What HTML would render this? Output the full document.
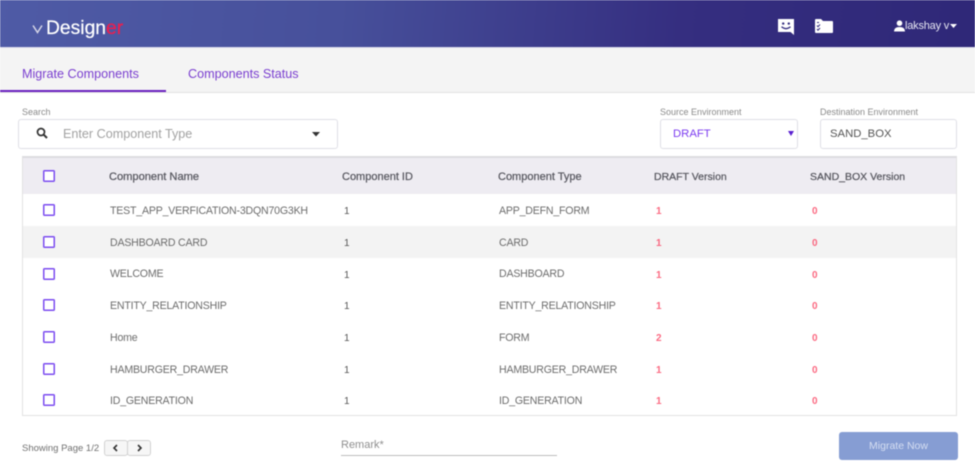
<!DOCTYPE html>
<html>
<head>
<meta charset="utf-8">
<style>
html,body{margin:0;padding:0;background:#fff;}
body{width:975px;height:471px;overflow:hidden;position:relative;font-family:"Liberation Sans",sans-serif;color:#555;}
.a{position:absolute;white-space:nowrap;}
#w{position:absolute;left:0;top:0;width:975px;height:471px;overflow:hidden;filter:blur(0.4px);}
.hdr{left:0;top:0;width:975px;height:47px;background:linear-gradient(95deg,#4f5ba6 0%,#47509b 35%,#352e80 70%,#2f2878 100%);}
.tabs{left:0;top:47px;width:975px;height:46px;background:#f4f4f4;border-top:1px solid #dcdcec;border-bottom:1px solid #e2e2e2;box-sizing:border-box;}
.tab{font-size:12.6px;color:#7a3fd0;top:67px;}
.lbl{font-size:9px;color:#8a8a8a;top:107px;}
.box{background:#fff;border:1px solid #dfdfe6;border-radius:3px;box-sizing:border-box;}
.th{font-size:11.1px;color:#585860;top:171px;font-weight:400;-webkit-text-stroke:.25px #585860;}
.t{font-size:10.6px;letter-spacing:-.2px;color:#6c6c6c;transform:translateY(2px);}
.n{font-size:10px;color:#555;transform:translateY(2px);}
.r{font-size:10px;color:#fb4f6c;font-weight:700;opacity:.85;transform:translateY(2px);}
.cb{position:absolute;left:43px;width:10px;height:10px;border:1px solid #7c4df0;border-radius:1.5px;background:#fff;box-shadow:inset 0 0 0 .5px #7c4df0;}
.btn{position:absolute;top:440px;border:1px solid #d2d2d2;border-radius:3px;background:#f6f6f6;box-sizing:border-box;}
</style>
</head>
<body>
<div id="w">
<div class="a hdr"></div>
<svg class="a" style="left:32px;top:24px" width="12" height="10" viewBox="0 0 12 10"><path d="M1 1.5 L5.5 8.5 L10 1.5" fill="none" stroke="#d5d5e6" stroke-width="1.5"/></svg>
<div class="a" style="left:46px;top:16px;font-size:19.3px;line-height:26px;color:#fff;-webkit-text-stroke:.2px #fff">Design<span style="color:#ea1f50;-webkit-text-stroke:.3px #ea1f50">er</span></div>

<svg class="a" style="left:777px;top:18px" width="18" height="18" viewBox="0 0 18 18"><path d="M1 1 H17 V17 L13.5 14 H1 Z" fill="#fff"/><circle cx="6.2" cy="5.6" r="1.2" fill="#352e80"/><circle cx="11.8" cy="5.6" r="1.2" fill="#352e80"/><path d="M4.5 8.8 Q9 12.5 13.5 8.8" fill="none" stroke="#352e80" stroke-width="1.3"/></svg>
<svg class="a" style="left:814px;top:18px" width="20" height="16" viewBox="0 0 20 16"><path d="M1 2 Q1 1 2 1 H7 L9 3 H18 Q19 3 19 4 V14 Q19 15 18 15 H2 Q1 15 1 14 Z" fill="#fff"/><path d="M3 4.5 H5 M3 7.5 L4 8.7 L6 6.5 M3 11 L4 12.2 L6 10" fill="none" stroke="#352e80" stroke-width="1"/></svg>
<svg class="a" style="left:894px;top:20px" width="11" height="12" viewBox="0 0 11 12"><circle cx="5.5" cy="3.2" r="2.8" fill="#fff"/><path d="M0 11.5 Q0 7 5.5 7 Q11 7 11 11.5 Z" fill="#fff"/></svg>
<div class="a" style="left:905px;top:19px;font-size:11px;line-height:15px;color:#e6e6f2;letter-spacing:-.2px">lakshay v</div>
<svg class="a" style="left:950px;top:24px" width="7" height="4" viewBox="0 0 7 4"><path d="M0 0 H7 L3.5 4 Z" fill="#fff"/></svg>

<div class="a tabs"></div>
<div class="a tab" style="left:22px">Migrate Components</div>
<div class="a tab" style="left:188px">Components Status</div>
<div class="a" style="left:0;top:90px;width:166px;height:2px;background:#6a1fc0"></div>

<div class="a lbl" style="left:22px">Search</div>
<div class="a box" style="left:18px;top:119px;width:320px;height:30px"></div>
<svg class="a" style="left:36px;top:127px" width="12" height="12" viewBox="0 0 12 12"><circle cx="5" cy="5" r="3.5" fill="none" stroke="#333" stroke-width="1.7"/><path d="M7.6 7.6 L11 11" stroke="#333" stroke-width="2"/></svg>
<div class="a" style="left:63px;top:127px;font-size:12.6px;color:#a2a2a2">Enter Component Type</div>
<svg class="a" style="left:312px;top:132px" width="8" height="5" viewBox="0 0 8 5"><path d="M0 0 H8 L4 4.5 Z" fill="#333"/></svg>

<div class="a lbl" style="left:660px">Source Environment</div>
<div class="a box" style="left:660px;top:119px;width:138px;height:30px"></div>
<div class="a" style="left:673px;top:128px;font-size:11.3px;color:#7c3cf0">DRAFT</div>
<svg class="a" style="left:788px;top:131px" width="6" height="5" viewBox="0 0 6 5"><path d="M0 0 H6 L3 5 Z" fill="#5a20d0"/></svg>

<div class="a lbl" style="left:820px">Destination Environment</div>
<div class="a box" style="left:820px;top:119px;width:137px;height:30px"></div>
<div class="a" style="left:830px;top:128px;font-size:11.3px;color:#555">SAND_BOX</div>

<div class="a" style="left:22px;top:156px;width:935px;height:260px;border:1px solid #e2e2e2;border-top:2px solid #dcdce0;box-sizing:border-box"></div>
<div class="a" style="left:23px;top:158px;width:933px;height:36px;background:#eeecf2"></div>
<div class="a" style="left:23px;top:226px;width:933px;height:32px;background:#f3f3f3"></div>

<div class="cb" style="top:170px"></div>
<div class="a th" style="left:109px">Component Name</div>
<div class="a th" style="left:342px;font-size:11px">Component ID</div>
<div class="a th" style="left:498px;font-size:11px">Component Type</div>
<div class="a th" style="left:654px;font-size:10.5px">DRAFT Version</div>
<div class="a th" style="left:810px;font-size:10.5px">SAND_BOX Version</div>

<div class="cb" style="top:204px"></div>
<div class="a t" style="left:110px;top:203px">TEST_APP_VERFICATION-3DQN70G3KH</div>
<div class="a n" style="left:344px;top:204px">1</div>
<div class="a t" style="left:499px;top:203px">APP_DEFN_FORM</div>
<div class="a r" style="left:656px;top:204px">1</div>
<div class="a r" style="left:812px;top:204px">0</div>

<div class="cb" style="top:236px"></div>
<div class="a t" style="left:110px;top:235px">DASHBOARD CARD</div>
<div class="a n" style="left:344px;top:236px">1</div>
<div class="a t" style="left:499px;top:235px">CARD</div>
<div class="a r" style="left:656px;top:236px">1</div>
<div class="a r" style="left:812px;top:236px">0</div>

<div class="cb" style="top:268px"></div>
<div class="a t" style="left:110px;top:266px">WELCOME</div>
<div class="a n" style="left:344px;top:268px">1</div>
<div class="a t" style="left:499px;top:266px">DASHBOARD</div>
<div class="a r" style="left:656px;top:268px">1</div>
<div class="a r" style="left:812px;top:268px">0</div>

<div class="cb" style="top:299px"></div>
<div class="a t" style="left:110px;top:298px">ENTITY_RELATIONSHIP</div>
<div class="a n" style="left:344px;top:299px">1</div>
<div class="a t" style="left:499px;top:298px">ENTITY_RELATIONSHIP</div>
<div class="a r" style="left:656px;top:299px">1</div>
<div class="a r" style="left:812px;top:299px">0</div>

<div class="cb" style="top:331px"></div>
<div class="a t" style="left:110px;top:330px">Home</div>
<div class="a n" style="left:344px;top:331px">1</div>
<div class="a t" style="left:499px;top:330px">FORM</div>
<div class="a r" style="left:656px;top:331px">2</div>
<div class="a r" style="left:812px;top:331px">0</div>

<div class="cb" style="top:363px"></div>
<div class="a t" style="left:110px;top:362px">HAMBURGER_DRAWER</div>
<div class="a n" style="left:344px;top:363px">1</div>
<div class="a t" style="left:499px;top:362px">HAMBURGER_DRAWER</div>
<div class="a r" style="left:656px;top:363px">1</div>
<div class="a r" style="left:812px;top:363px">0</div>

<div class="cb" style="top:394px"></div>
<div class="a t" style="left:110px;top:393px">ID_GENERATION</div>
<div class="a n" style="left:344px;top:394px">1</div>
<div class="a t" style="left:499px;top:393px">ID_GENERATION</div>
<div class="a r" style="left:656px;top:394px">1</div>
<div class="a r" style="left:812px;top:394px">0</div>

<div class="a" style="left:22px;top:443px;font-size:9.5px;color:#707070">Showing Page 1/2</div>
<div class="btn" style="left:104px;width:24px;height:16px"></div>
<div class="btn" style="left:127px;width:24px;height:16px"></div>
<svg class="a" style="left:112px;top:444px" width="7" height="8" viewBox="0 0 7 8"><path d="M5 1 L2 4 L5 7" fill="none" stroke="#333" stroke-width="1.6"/></svg>
<svg class="a" style="left:136px;top:444px" width="7" height="8" viewBox="0 0 7 8"><path d="M2 1 L5 4 L2 7" fill="none" stroke="#333" stroke-width="1.6"/></svg>

<div class="a" style="left:341px;top:439px;font-size:11px;color:#8f8f8f">Remark*</div>
<div class="a" style="left:341px;top:455px;width:216px;height:1px;background:#bdbdbd"></div>

<div class="a" style="left:839px;top:432px;width:119px;height:28px;background:#869dd3;border-radius:3px;color:#d5def2;font-size:10.5px;line-height:29px;text-align:center">Migrate Now</div>
</div>
</body>
</html>
